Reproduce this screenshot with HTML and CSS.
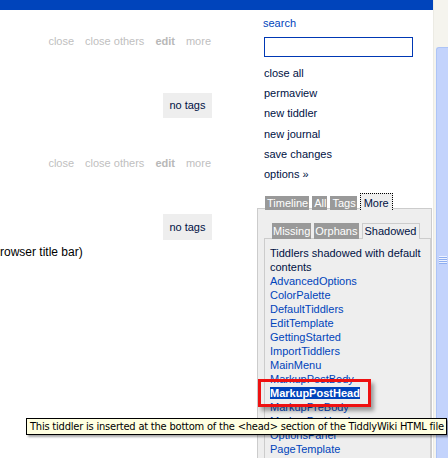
FILE: index.html
```html
<!DOCTYPE html>
<html>
<head>
<meta charset="utf-8">
<title>TiddlyWiki</title>
<link rel="stylesheet" href="styles.css">
</head>
<body>
<div class="page">
  <div class="window">
    <div class="header"></div>
    <div class="columns">
      <div class="main">
        <div class="tiddler first">
          <div class="toolbar">
            <span>close</span><span>close others</span><span class="bold">edit</span><span>more</span>
          </div>
          <div class="tag-row"><span class="tagged">no tags</span></div>
        </div>
        <div class="tiddler second">
          <div class="toolbar">
            <span>close</span><span>close others</span><span class="bold">edit</span><span>more</span>
          </div>
          <div class="tag-row"><span class="tagged tall">no tags</span></div>
          <div class="viewer">rowser title bar)</div>
        </div>
      </div>
      <div class="sidebar">
        <div class="search-label">search</div>
        <div class="search-input"></div>
        <div class="menu">
          <div>close all</div>
          <div>permaview</div>
          <div>new tiddler</div>
          <div>new journal</div>
          <div>save changes</div>
          <div>options »</div>
        </div>
        <div class="tabs">
          <span class="tab">Timeline</span><span class="tab">All</span><span class="tab">Tags</span><span class="tab selected">More</span>
        </div>
        <div class="panel">
          <div class="tabs inner">
            <span class="tab">Missing</span><span class="tab">Orphans</span><span class="tab selected">Shadowed</span>
          </div>
          <div class="inner-panel">
            <div class="desc">Tiddlers shadowed with default contents</div>
            <div class="item">AdvancedOptions</div>
            <div class="item">ColorPalette</div>
            <div class="item">DefaultTiddlers</div>
            <div class="item">EditTemplate</div>
            <div class="item">GettingStarted</div>
            <div class="item">ImportTiddlers</div>
            <div class="item">MainMenu</div>
            <div class="item">MarkupPostBody</div>
            <div class="item"><span class="hover">MarkupPostHead</span></div>
            <div class="item">MarkupPreBody</div>
            <div class="item">MarkupPreHead</div>
            <div class="item">OptionsPanel</div>
            <div class="item">PageTemplate</div>
          </div>
        </div>
      </div>
    </div>
  </div>
  <div class="scrollbar">
    <div class="thumb"><div class="grip"></div></div>
  </div>
</div>
<div class="highlight-box"></div>
<div class="tooltip">This tiddler is inserted at the bottom of the &lt;head&gt; section of the TiddlyWiki HTML file</div>
</body>
</html>
```

FILE: styles.css
```css
html, body {
  margin: 0;
  padding: 0;
}
body {
  width: 448px;
  height: 458px;
  overflow: hidden;
  position: relative;
  background: #fff;
  font-family: "Liberation Sans", Arial, sans-serif;
  font-size: 11px;
  color: #001144;
}
.page {
  display: flex;
  height: 458px;
}
.window {
  width: 433px;
  display: flex;
  flex-direction: column;
}
.header {
  height: 10px;
  background: #0044bb;
  flex-shrink: 0;
}
.columns {
  display: flex;
  flex: 1;
}
.main {
  width: 257px;
  flex-shrink: 0;
}
.toolbar {
  display: flex;
  justify-content: flex-end;
  gap: 11px;
  padding-right: 46px;
  line-height: 14px;
  color: #c0c0c0;
}
.toolbar .bold {
  font-weight: bold;
  color: #b8b8b8;
}
.first .toolbar { margin-top: 24px; }
.first .tag-row { margin-top: 45px; }
.second .toolbar { margin-top: 38px; }
.second .tag-row { margin-top: 44px; }
.tag-row {
  display: flex;
  justify-content: flex-end;
  padding-right: 45px;
}
.tagged {
  display: block;
  height: 25px;
  line-height: 25px;
  padding: 0 6.5px;
  background: #eeeeee;
  color: #001144;
}
.tagged.tall {
  height: 26px;
  line-height: 26px;
}
.viewer {
  margin-top: 5px;
  font-size: 12px;
  line-height: 14px;
  color: #000;
}
.sidebar {
  width: 176px;
  flex-shrink: 0;
  display: flex;
  flex-direction: column;
}
.search-label {
  margin: 6px 0 0 6px;
  line-height: 14px;
  color: #0044bb;
}
.search-input {
  margin: 7px 0 0 7px;
  width: 149px;
  height: 20px;
  box-sizing: border-box;
  border: 1px solid #0038b4;
  background: #fff;
}
.menu {
  margin: 6px 0 0 7px;
  line-height: 20.2px;
  color: #001144;
}
.tabs {
  display: flex;
  align-items: flex-end;
  margin: 9px 0 0 8px;
  position: relative;
  z-index: 1;
  line-height: 14px;
}
.tab {
  display: block;
  height: 14px;
  padding: 0 1px 0 2px;
  margin-right: 3px;
  background: #999999;
  color: #ffffff;
}
.tab.selected {
  height: 17px;
  line-height: 18px;
  box-sizing: border-box;
  padding: 0 3px;
  background: #eeeeee;
  color: #001144;
  border: 1px dotted #000;
  border-bottom: none;
}
.panel {
  margin-top: -2px;
  margin-right: 1px;
  flex: 1;
  border: 1px solid #cccccc;
  border-bottom: none;
  background: #eeeeee;
  padding: 14px 0 0 6px;
  display: flex;
  flex-direction: column;
}
.tabs.inner {
  margin: 0 0 0 8px;
  line-height: 16px;
}
.tabs.inner .tab {
  height: 16px;
  padding: 0 1px;
}
.tabs.inner .tab.selected {
  height: 16px;
  line-height: 15px;
  padding: 0 2px;
  border: 1px solid #cccccc;
  border-bottom: none;
  background: #eeeeee;
}
.inner-panel {
  margin-top: -1px;
  flex: 1;
  border: 1px solid #cccccc;
  border-right-color: #d0d0d0;
  border-bottom: none;
  background: #eeeeee;
  padding: 7px 0 0 5px;
  line-height: 14px;
}
.desc {
  color: #001144;
  padding-right: 4px;
}
.item {
  color: #0044bb;
}
.hover {
  background: #0044bb;
  color: #ffffff;
  font-weight: bold;
}
.scrollbar {
  width: 15px;
  flex-shrink: 0;
  box-sizing: border-box;
  padding-top: 47px;
  padding-left: 2px;
  background: #f5f4ee;
  border-left: 1px solid #ecebe4;
}
.thumb {
  height: 426px;
  box-sizing: border-box;
  background: #c3d3fc;
  border: 1px solid #adc4f6;
  border-right: none;
  border-radius: 3px 0 0 0;
  display: flex;
  align-items: center;
  justify-content: center;
}
.grip {
  width: 8px;
  height: 8px;
  background: repeating-linear-gradient(to bottom, #eef3ff 0, #eef3ff 1px, #8eaef0 1px, #8eaef0 2px);
}
.highlight-box {
  position: absolute;
  left: 258px;
  top: 379px;
  width: 113px;
  height: 28px;
  box-sizing: border-box;
  border: 3px solid #ee1111;
  box-shadow: 3px 4px 4px rgba(0, 0, 0, 0.35);
}
.tooltip {
  position: absolute;
  left: 26px;
  top: 418px;
  width: 421px;
  height: 17px;
  box-sizing: border-box;
  border: 1px solid #000;
  background: #ffffe1;
  color: #000;
  font-family: "DejaVu Sans Condensed", "DejaVu Sans", sans-serif;
  font-size: 11px;
  letter-spacing: -0.2px;
  line-height: 15px;
  padding: 0 3px;
  white-space: nowrap;
  overflow: hidden;
  box-shadow: 2px 2px 2px rgba(0, 0, 0, 0.35);
}
```
